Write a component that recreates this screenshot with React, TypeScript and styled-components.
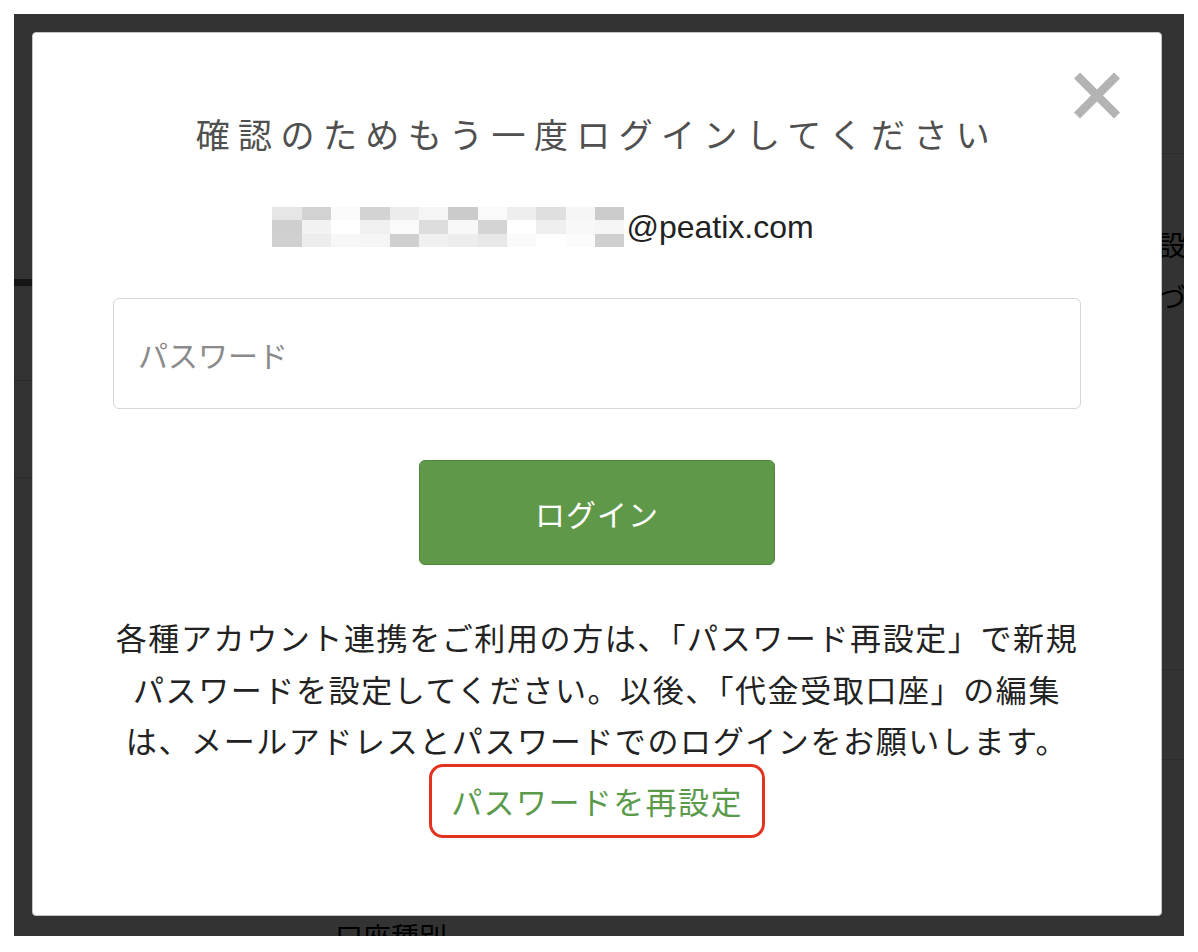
import React from "react";
import styled, { createGlobalStyle } from "styled-components";

const GlobalStyle = createGlobalStyle`
	html, body {
		margin: 0;
		padding: 0;
		background: #fff;
	}
	body {
		font-family: "Noto Sans CJK JP", "Noto Sans", sans-serif;
	}
	* {
		box-sizing: border-box;
	}
`;

const Page = styled.div`
	width: 1198px;
	height: 952px;
	padding: 14px 14px 16px 14px;
`;

const Frame = styled.div`
	position: relative;
	height: 922px;
	overflow: hidden;
	background: #fff;
`;

// the page that sits under the dimmed overlay
const Behind = styled.div`
	display: flex;
	height: 100%;
`;

const Sidebar = styled.div`
	width: 252px;
	flex-shrink: 0;
	display: flex;
	flex-direction: column;
	background: #fbfbfb;
`;

const SideBlock = styled.div<{ $h: number; $line: string }>`
	height: ${(p) => p.$h}px;
	flex-shrink: 0;
	border-bottom: ${(p) => p.$line};
`;

const Main = styled.div`
	flex: 1;
	min-width: 0;
	display: flex;
	flex-direction: column;
`;

const MainRow = styled.div<{ $h: number; $pad?: string }>`
	height: ${(p) => p.$h}px;
	flex-shrink: 0;
	border-bottom: 1px solid #d6d6d6;
	padding: ${(p) => p.$pad || "0"};
	font-size: 28px;
	line-height: 52px;
	color: #000;
	white-space: nowrap;
	overflow: hidden;
`;

const Dim = styled.div`
	position: absolute;
	inset: 0;
	background: rgba(0, 0, 0, 0.8);
`;

const Modal = styled.div`
	position: absolute;
	top: 18px;
	left: 18px;
	width: 1130px;
	height: 884px;
	background: #fff;
	border: 1px solid #c4c4c4;
	border-radius: 4px;
	display: flex;
	flex-direction: column;
	align-items: center;
	padding: 77px 80px 0;
`;

const CloseButton = styled.button`
	position: absolute;
	top: 38px;
	right: 40px;
	width: 48px;
	height: 49px;
	padding: 0;
	border: 0;
	background: none;
	cursor: pointer;
	svg {
		display: block;
	}
`;

const Title = styled.h2`
	margin: 0;
	font-size: 34px;
	line-height: 48px;
	font-weight: 400;
	letter-spacing: 8.4px;
	color: #505050;
	white-space: nowrap;
`;

const EmailRow = styled.div`
	display: flex;
	align-items: center;
	height: 40px;
	margin-top: 49px;
	padding-right: 108px;
`;

const Mosaic = styled.div`
	display: grid;
	grid-template-columns: repeat(12, 29.33px);
	grid-template-rows: repeat(3, 13.33px);
	grid-auto-flow: column;
	width: 352px;
	height: 40px;
`;

const Cell = styled.span<{ $c: string }>`
	background: ${(p) => p.$c};
`;

const EmailText = styled.span`
	margin-left: 2px;
	font-family: "Liberation Sans", Arial, sans-serif;
	font-size: 32px;
	line-height: 36px;
	color: #222;
`;

const PasswordInput = styled.input`
	align-self: stretch;
	height: 111px;
	margin-top: 51px;
	padding: 0 24px;
	border: 1px solid #d6d6d6;
	border-radius: 6px;
	font-family: "Noto Sans CJK JP", sans-serif;
	font-size: 30px;
	color: #222;
	outline: none;
	&::placeholder {
		color: #8a8a8a;
	}
`;

const LoginButton = styled.button`
	width: 356px;
	height: 105px;
	margin-top: 51px;
	background: #5f9849;
	border: 1px solid #4f873b;
	border-radius: 6px;
	color: #fff;
	font-family: "Noto Sans CJK JP", sans-serif;
	font-size: 30px;
	letter-spacing: 1px;
	cursor: pointer;
`;

const Notice = styled.p`
	margin: 46px 0 0;
	font-size: 31px;
	line-height: 51.5px;
	letter-spacing: 1.6px;
	color: #222;
	text-align: center;
	white-space: nowrap;
`;

const ResetBox = styled.div`
	margin-top: -2px;
	padding: 16px 19px;
	border: 3px solid #e3321f;
	border-radius: 14px;
`;

const ResetLink = styled.a`
	display: block;
	font-size: 31px;
	line-height: 36px;
	letter-spacing: 1.4px;
	color: #5b9a4b;
	text-decoration: none;
	white-space: nowrap;
`;

// pixelated block over the hidden part of the address
const mosaic = [
	["#e6e6e6", "#cfcfcf", "#d0d0d0"],
	["#d2d2d2", "#f2f2f2", "#ededed"],
	["#fafafa", "#ffffff", "#f7f7f7"],
	["#d3d3d3", "#f0f0f0", "#f5f5f5"],
	["#ececec", "#fafafa", "#cfcfcf"],
	["#f5f5f5", "#dcdcdc", "#f0f0f0"],
	["#cbcbcb", "#f8f8f8", "#ededed"],
	["#fafafa", "#d4d4d4", "#e8e8e8"],
	["#eeeeee", "#ffffff", "#fafafa"],
	["#dfdfdf", "#efefef", "#ffffff"],
	["#f6f6f6", "#f8f8f8", "#fbfbfb"],
	["#cccccc", "#f5f5f5", "#cfcfcf"],
];

const CloseIcon = () => (
	<svg width="48" height="49" viewBox="0 0 48 49">
		<path
			d="M4 4.5 L44 44.5 M44 4.5 L4 44.5"
			stroke="#b3b3b3"
			strokeWidth="8.5"
			strokeLinecap="butt"
			fill="none"
		/>
	</svg>
);

const App = () => {
	return (
		<>
			<GlobalStyle />
			<Page>
				<Frame>
					<Behind>
						<Sidebar>
							<SideBlock $h={272} $line="7px solid #6a6a6a" />
							<SideBlock $h={95} $line="1px solid #d6d6d6" />
							<SideBlock $h={97} $line="1px solid #d6d6d6" />
						</Sidebar>
						<Main>
							<MainRow $h={140} />
							<MainRow $h={516} $pad="64px 0 0 892px">
								設定
								<br />
								づく
							</MainRow>
							<MainRow $h={90} />
							<MainRow $h={180} $pad="150px 0 0 69px">
								口座種別
							</MainRow>
						</Main>
					</Behind>
					<Dim />
					<Modal role="dialog">
						<CloseButton aria-label="閉じる">
							<CloseIcon />
						</CloseButton>
						<Title>確認のためもう一度ログインしてください</Title>
						<EmailRow>
							<Mosaic>
								{mosaic.map((col, i) =>
									col.map((c, j) => <Cell key={`${i}-${j}`} $c={c} />)
								)}
							</Mosaic>
							<EmailText>@peatix.com</EmailText>
						</EmailRow>
						<PasswordInput type="password" placeholder="パスワード" />
						<LoginButton>ログイン</LoginButton>
						<Notice>
							各種アカウント連携をご利用の方は、「パスワード再設定」で新規
							<br />
							パスワードを設定してください。以後、「代金受取口座」の編集
							<br />
							は、メールアドレスとパスワードでのログインをお願いします。
						</Notice>
						<ResetBox>
							<ResetLink href="#">パスワードを再設定</ResetLink>
						</ResetBox>
					</Modal>
				</Frame>
			</Page>
		</>
	);
};

export default App;
